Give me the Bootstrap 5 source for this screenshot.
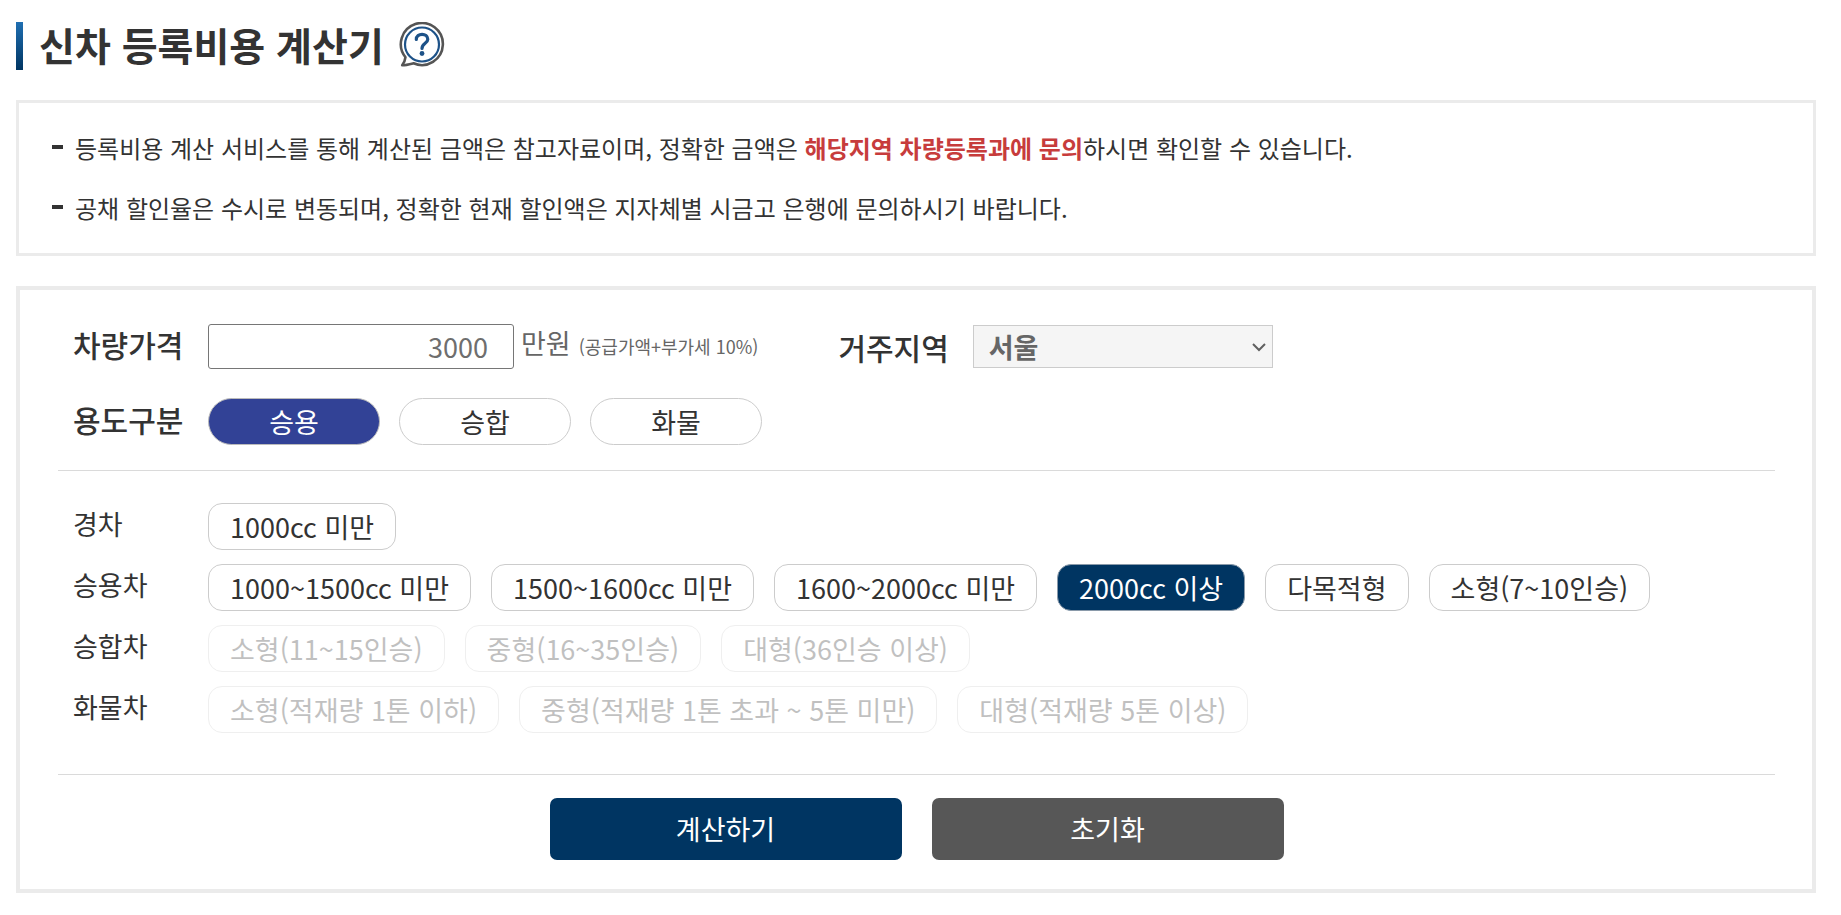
<!DOCTYPE html>
<html lang="ko">
<head>
<meta charset="utf-8">
<meta name="viewport" content="width=device-width, initial-scale=1">
<title>신차 등록비용 계산기</title>
<link rel="stylesheet" href="https://cdn.jsdelivr.net/npm/bootstrap@5.3.0/dist/css/bootstrap.min.css">
<style>
  body { font-family: "Noto Sans CJK KR", sans-serif; font-size: 27px; line-height: 40px; color: #333; background: #fff; }
  .page { padding: 22px 25px 22px 16px; }
  .title-bar { width: 7px; height: 48px; background: linear-gradient(#1f6fb2, #003562); }
  .page-title { font-size: 39px; line-height: 44px; font-weight: 700; margin: 0 0 0 16px; }
  .help-btn { width: 46px; height: 46px; margin-left: 15px; }
  .notice { border: 3px solid #ebebeb; margin-top: 30px; padding: 15px 32px; font-size: 24px; }
  .notice li { display: flex; align-items: center; min-height: 60px; }
  .notice li::before { content: ""; flex: none; width: 11px; height: 4px; margin: 0 12px 3px 1px; background: #333; }
  .notice strong { color: #c73c3c; }
  .calc { border: 4px solid #ebebeb; margin-top: 30px; padding: 33px 37px 29px 38px; }
  .field-row { padding-left: 15px; }
  .field-label { width: 135px; flex: none; line-height: 42px; }
  .label-lg { font-size: 30px; font-weight: 500; }
  .field-label.label-lg { line-height: 38px; padding-bottom: 6px; }
  .price { width: 306px; height: 45px; padding: 0 25px 0 8px; border: 1px solid #767676; border-radius: 3px; color: #6e6e6e; text-align: right; }
  .unit-group { padding-bottom: 4px; }
  .unit { margin-left: 7px; color: #666; }
  .unit-note { font-size: 18px; color: #666; margin-left: 8px; }
  .region-label { margin: 0 24px 0 80px; }
  .region { width: 300px; height: 43px; padding: 0 30px 0 15px; font-size: 27px; line-height: 40px; font-weight: 700; color: #666; border: 1px solid #ccc; border-radius: 0; background-color: #f5f5f5; background-position: right 6px center; background-size: 14px 14px;
    background-image: url("data:image/svg+xml,%3Csvg xmlns='http://www.w3.org/2000/svg' viewBox='0 0 14 14'%3E%3Cpath d='M1 4l6 6 6-6' fill='none' stroke='%23606060' stroke-width='2'/%3E%3C/svg%3E"); }
  .use-row { margin: 28px 0 25px; }
  .opt { height: 47px; padding: 0 21px; font-size: 27px; line-height: 44px; color: #333; background: #fff; border: 1px solid #ccc; border-radius: 14px; }
  .opts { gap: 14px 20px; }
  .opt-pill { width: 172px; border-radius: 24px; padding: 0; }
  .opts-pill { gap: 19px; }
  .opt-pill.active { background: #324296; border-color: #bbb; color: #fff; }
  .opt.active:not(.opt-pill) { background: #003562; border-color: #8a9aaa; color: #fff; }
  .opt:disabled { opacity: .3; color: #333; background: #fff; border-color: #ccc; }
  .rule { border-top: 1px solid #dadada; }
  .types { padding: 32px 0 41px; gap: 14px; }
  .acts { gap: 30px; margin-top: 23px; }
  .act { width: 352px; height: 62px; border: 0; border-radius: 7px; font-size: 27px; color: #fff; }
  .act-go { background: #003562; }
  .act-reset { background: #575757; }
</style>
</head>
<body>
<main class="page">
  <header class="d-flex">
    <span class="title-bar"></span>
    <h1 class="page-title">신차 등록비용 계산기</h1>
    <button type="button" class="help-btn btn p-0 border-0 d-flex" aria-label="도움말">
      <svg width="46" height="46" viewBox="0 0 46 46" fill="none" aria-hidden="true">
        <path d="M6.5 35.2A21 21 0 1 1 14.5 41.3C11 42.2 7 43.3 3.2 43.3C5.2 40.5 6.2 38 6.5 35.2Z" stroke="#555" stroke-width="2.6" stroke-linejoin="round"/>
        <circle cx="23" cy="22.5" r="17" stroke="#1d5288" stroke-width="2.2"/>
        <path d="M17.3 17.5C17.3 10.5 28.8 10.7 28.8 17.3C28.8 21.5 23 21.3 23 26.5" stroke="#1d5288" stroke-width="3.2" stroke-linecap="round"/>
        <circle cx="23" cy="31.5" r="2.4" fill="#1d5288"/>
      </svg>
    </button>
  </header>

  <section class="notice">
    <ul class="list-unstyled mb-0">
      <li><span>등록비용 계산 서비스를 통해 계산된 금액은 참고자료이며, 정확한 금액은 <strong>해당지역 차량등록과에 문의</strong>하시면 확인할 수 있습니다.</span></li>
      <li><span>공채 할인율은 수시로 변동되며, 정확한 현재 할인액은 지자체별 시금고 은행에 문의하시기 바랍니다.</span></li>
    </ul>
  </section>

  <form class="calc">
    <div class="field-row d-flex align-items-center">
      <label class="field-label label-lg" for="price">차량가격</label>
      <input class="price" id="price" type="text" inputmode="numeric" value="3000">
      <span class="unit-group d-flex align-items-baseline"><span class="unit">만원</span><span class="unit-note">(공급가액+부가세 10%)</span></span>
      <label class="region-label label-lg" for="region">거주지역</label>
      <select class="form-select region" id="region"><option>서울</option></select>
    </div>

    <div class="field-row use-row d-flex align-items-center" role="group" aria-labelledby="use-label">
      <span class="field-label label-lg" id="use-label">용도구분</span>
      <div class="opts-pill d-flex flex-wrap">
        <button type="button" class="opt opt-pill active" aria-pressed="true">승용</button>
        <button type="button" class="opt opt-pill">승합</button>
        <button type="button" class="opt opt-pill">화물</button>
      </div>
    </div>

    <div class="rule"></div>

    <div class="types d-flex flex-column">
      <div class="field-row d-flex">
        <span class="field-label">경차</span>
        <div class="opts d-flex flex-wrap">
          <button type="button" class="opt">1000cc 미만</button>
        </div>
      </div>
      <div class="field-row d-flex">
        <span class="field-label">승용차</span>
        <div class="opts d-flex flex-wrap">
          <button type="button" class="opt">1000~1500cc 미만</button>
          <button type="button" class="opt">1500~1600cc 미만</button>
          <button type="button" class="opt">1600~2000cc 미만</button>
          <button type="button" class="opt active" aria-pressed="true">2000cc 이상</button>
          <button type="button" class="opt">다목적형</button>
          <button type="button" class="opt">소형(7~10인승)</button>
        </div>
      </div>
      <div class="field-row d-flex">
        <span class="field-label">승합차</span>
        <div class="opts d-flex flex-wrap">
          <button type="button" class="opt" disabled>소형(11~15인승)</button>
          <button type="button" class="opt" disabled>중형(16~35인승)</button>
          <button type="button" class="opt" disabled>대형(36인승 이상)</button>
        </div>
      </div>
      <div class="field-row d-flex">
        <span class="field-label">화물차</span>
        <div class="opts d-flex flex-wrap">
          <button type="button" class="opt" disabled>소형(적재량 1톤 이하)</button>
          <button type="button" class="opt" disabled>중형(적재량 1톤 초과 ~ 5톤 미만)</button>
          <button type="button" class="opt" disabled>대형(적재량 5톤 이상)</button>
        </div>
      </div>
    </div>

    <div class="rule"></div>

    <div class="acts d-flex flex-wrap justify-content-center">
      <button type="button" class="act act-go">계산하기</button>
      <button type="reset" class="act act-reset">초기화</button>
    </div>
  </form>
</main>
<script src="https://cdn.jsdelivr.net/npm/bootstrap@5.3.0/dist/js/bootstrap.bundle.min.js"></script>
</body>
</html>
